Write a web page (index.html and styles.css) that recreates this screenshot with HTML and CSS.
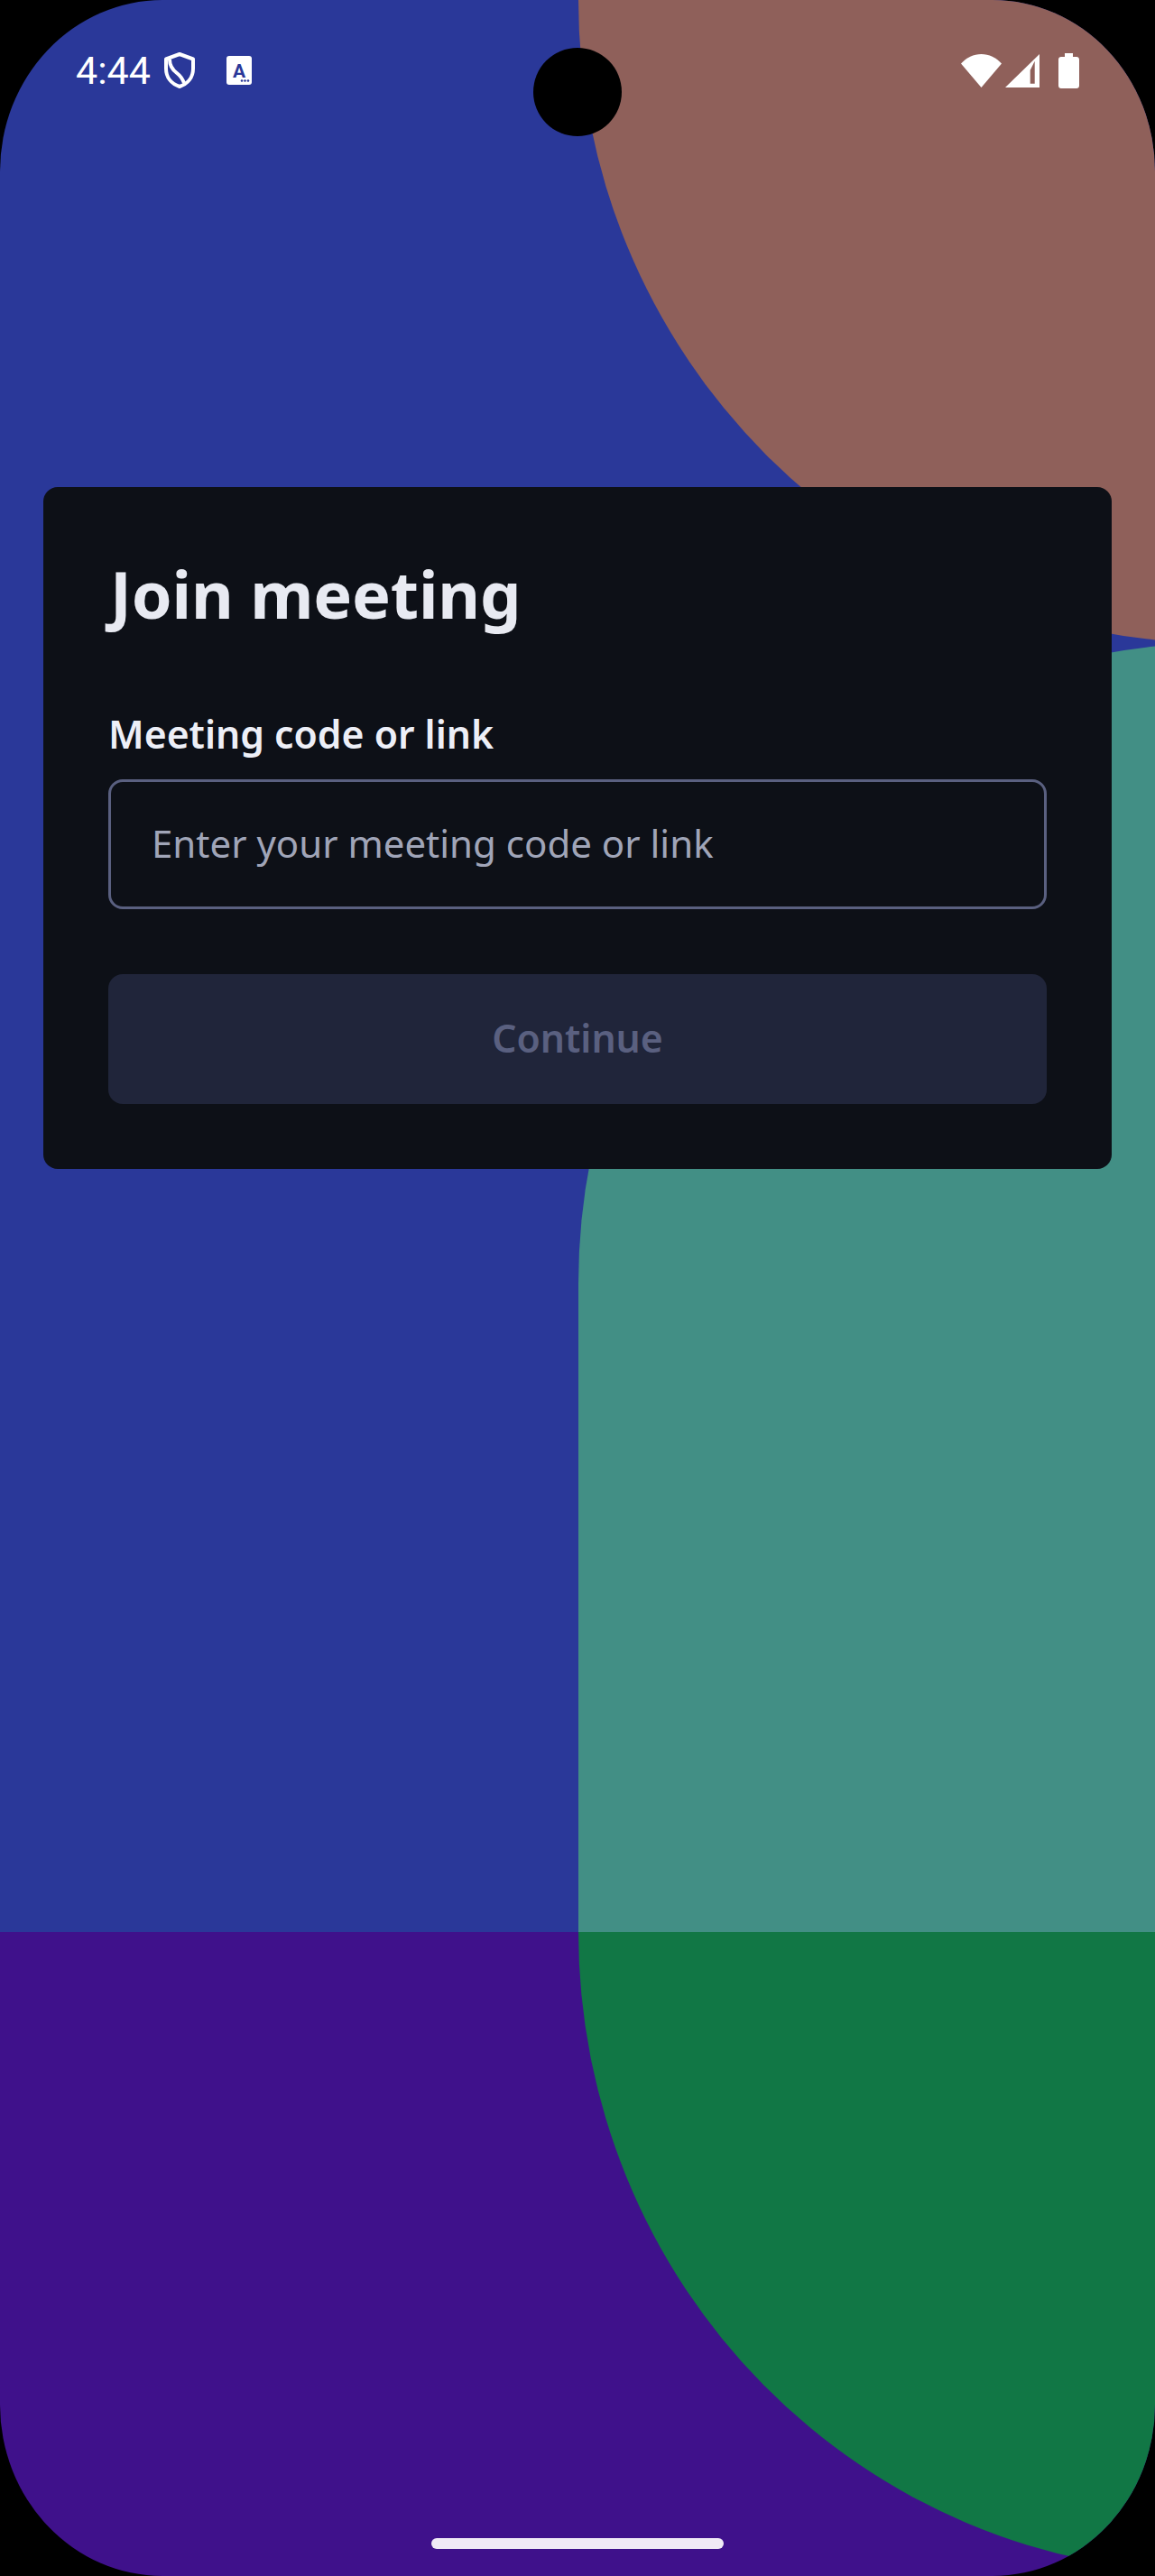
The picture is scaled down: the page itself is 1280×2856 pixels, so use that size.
FILE: index.html
```html
<!DOCTYPE html>
<html lang="en">
<head>
    <meta charset="UTF-8">
    <meta name="viewport" content="width=device-width, initial-scale=1.0">
    <title>Join meeting</title>
    <link rel="stylesheet" href="styles.css">
</head>
<body>

<div class="screen">
    <svg class="backdrop" viewBox="0 0 1280 2856" aria-hidden="true">
        <rect class="shape-blue" width="1280" height="2142"/>
        <rect class="shape-purple" y="2142" width="1280" height="714"/>
        <path class="shape-brown" d="M641 0 A710 713 0 0 0 1351 713 V0 Z"/>
        <path class="shape-teal" d="M641 2142 V1423 A710 710 0 0 1 1351 713 V2142 Z"/>
        <path class="shape-green" d="M641 2142 A700 710 0 0 0 1341 2852 V2142 Z"/>
    </svg>

    <div class="camera"></div>

    <div class="status-bar">
        <div class="status-left">
            <span class="clock">4:44</span>
            <svg class="icon-shield" viewBox="0 0 34 40">
                <path d="M17 2 L32 7.5 V18 C32 28 26 35 17 38 C8 35 2 28 2 18 V7.5 Z"/>
                <path d="M6 8 C6 16 10 20 14 23 C18 26 20 29 22 34"/>
            </svg>
            <svg class="icon-a" viewBox="0 0 28 32">
                <rect width="28" height="32" rx="3"/>
                <text x="14" y="24" text-anchor="middle">A</text>
                <circle cx="17" cy="27.5" r="1.3"/>
                <circle cx="20.5" cy="27.5" r="1.3"/>
                <circle cx="24" cy="27.5" r="1.3"/>
            </svg>
        </div>
        <div class="status-right">
            <svg class="icon-wifi" viewBox="0 0 45 37">
                <path d="M0 10.5 C6 4 14 0 22.5 0 C31 0 39 4 45 10.5 L22.5 37 Z"/>
            </svg>
            <svg class="icon-signal" viewBox="0 0 38 37">
                <path fill-rule="evenodd" d="M0 37 L38 0 V37 Z M27.7 17.7 V32.7 H32.7 V7.7 Z"/>
            </svg>
            <svg class="icon-battery" viewBox="0 0 23 39">
                <path d="M7 0 H16 V4 H20 C21.7 4 23 5.3 23 7 V36 C23 37.7 21.7 39 20 39 H3 C1.3 39 0 37.7 0 36 V7 C0 5.3 1.3 4 3 4 H7 Z"/>
            </svg>
        </div>
    </div>

    <div class="card">
        <h1 class="card-title">Join meeting</h1>
        <label class="field-label" for="code">Meeting code or link</label>
        <input id="code" class="field-input" type="text" placeholder="Enter your meeting code or link">
        <button class="continue-btn" disabled>Continue</button>
    </div>

    <div class="home-bar"></div>
</div>

</body>
</html>
```

FILE: styles.css
```css
* {
    box-sizing: border-box;
}

body {
    margin: 0;
    background-color: #000;
    font-family: "Noto Sans", sans-serif;
}

.screen {
    position: relative;
    display: flex;
    flex-direction: column;
    width: 1280px;
    height: 2856px;
    overflow: hidden;
    border-radius: 180px / 190px;
}

.backdrop {
    position: absolute;
    top: 0;
    left: 0;
    width: 1280px;
    height: 2856px;
}

.shape-blue {
    fill: #2a3899;
}

.shape-purple {
    fill: #3f118b;
}

.shape-brown {
    fill: #8f605a;
}

.shape-teal {
    fill: #428f85;
}

.shape-green {
    fill: #117745;
}

.camera {
    position: absolute;
    top: 53px;
    left: 591px;
    width: 98px;
    height: 98px;
    border-radius: 50%;
    background-color: #000;
}

.status-bar {
    position: relative;
    display: flex;
    justify-content: space-between;
    align-items: center;
    height: 156px;
    padding: 0 84px;
}

.status-left,
.status-right {
    display: flex;
    align-items: center;
}

.clock {
    width: 98px;
    font-family: Roboto, sans-serif;
    font-size: 43px;
    color: #fff;
}

.icon-shield {
    width: 34px;
    height: 40px;
    fill: none;
    stroke: #fff;
    stroke-width: 4;
    stroke-linejoin: round;
}

.icon-a {
    width: 28px;
    height: 32px;
    margin-left: 35px;
    fill: #fff;
}

.icon-a text {
    font-family: Roboto, sans-serif;
    font-size: 21px;
    font-weight: 700;
    fill: #2a3899;
}

.icon-a circle {
    fill: #2a3899;
}

.icon-wifi {
    width: 45px;
    height: 37px;
    fill: #fff;
}

.icon-signal {
    width: 38px;
    height: 37px;
    margin-left: 4px;
    fill: #fff;
}

.icon-battery {
    width: 23px;
    height: 39px;
    margin-left: 21px;
    fill: #fff;
}

.card {
    position: relative;
    display: flex;
    flex-direction: column;
    margin: 384px 48px 0;
    padding: 72px;
    border-radius: 16px;
    background-color: #0d1017;
}

.card-title {
    margin: -2px 0 0 2px;
    font-size: 72px;
    line-height: 96px;
    font-weight: 700;
    letter-spacing: -0.15px;
    color: #e8eaf2;
}

.field-label {
    margin-top: 78px;
    font-size: 42.7px;
    line-height: 60px;
    font-weight: 600;
    color: #edeff7;
}

.field-input {
    height: 144px;
    margin-top: 20px;
    padding: 0 45px 3px;
    border: 3px solid #5a6080;
    border-radius: 16px;
    background: transparent;
    font-family: "Noto Sans", sans-serif;
    font-size: 42px;
    color: #edeff7;
}

.field-input::placeholder {
    color: #a0a5b8;
    opacity: 1;
}

.continue-btn {
    height: 144px;
    margin-top: 72px;
    padding-bottom: 4px;
    border: 0;
    border-radius: 16px;
    background-color: #20253a;
    font-family: "Noto Sans", sans-serif;
    font-size: 42.7px;
    font-weight: 600;
    color: #5a6080;
}

.home-bar {
    position: absolute;
    bottom: 30px;
    left: 478px;
    width: 324px;
    height: 12px;
    border-radius: 6px;
    background-color: #f0eaf6;
}
```
